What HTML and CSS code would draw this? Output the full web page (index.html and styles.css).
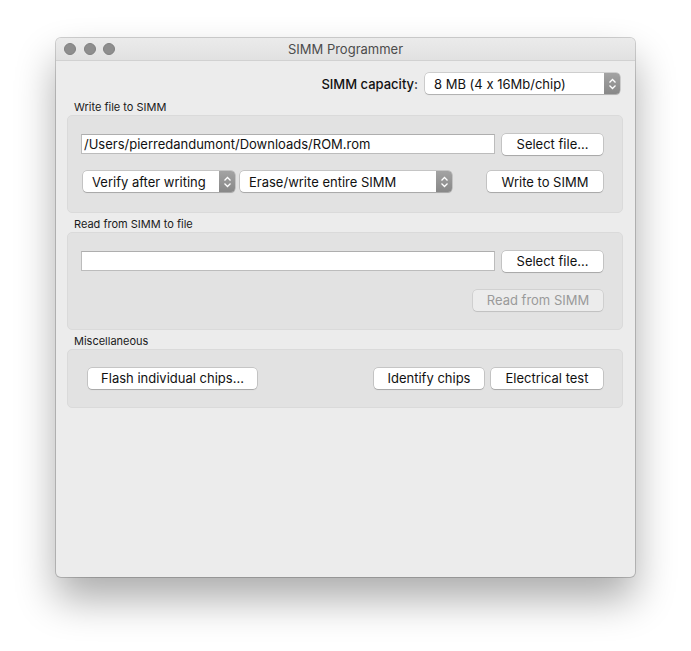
FILE: index.html
```html
<!DOCTYPE html>
<html lang="en">
<head>
  <meta charset="UTF-8" />
  <title>SIMM Programmer</title>
  <link rel="stylesheet" href="styles.css">
</head>
<body>
  <div class="window">
    <div class="titlebar">
      <div class="lights">
        <span class="light"></span>
        <span class="light"></span>
        <span class="light"></span>
      </div>
      <div class="title">SIMM Programmer</div>
    </div>

    <div class="content">
      <!-- capacity -->
      <div class="capacity-row">
        <span class="capacity-label">SIMM capacity:</span>
        <div class="popup popup-capacity">
          <span class="popup-text">8 MB (4 x 16Mb/chip)</span>
          <span class="stepper">
            <svg width="9" height="12" viewBox="0 0 9 12"><path d="M1.5 4.5 L4.5 1.5 L7.5 4.5 M1.5 7.5 L4.5 10.5 L7.5 7.5" fill="none" stroke="#fff" stroke-width="1.3"/></svg>
          </span>
        </div>
      </div>

      <!-- write -->
      <div class="group-label">Write file to SIMM</div>
      <div class="group">
        <div class="row">
          <input class="field" type="text" value="/Users/pierredandumont/Downloads/ROM.rom">
          <button class="btn btn-select">Select file...</button>
        </div>
        <div class="row row-options">
          <div class="popup popup-verify">
            <span class="popup-text">Verify after writing</span>
            <span class="stepper">
              <svg width="9" height="12" viewBox="0 0 9 12"><path d="M1.5 4.5 L4.5 1.5 L7.5 4.5 M1.5 7.5 L4.5 10.5 L7.5 7.5" fill="none" stroke="#fff" stroke-width="1.3"/></svg>
            </span>
          </div>
          <div class="popup popup-erase">
            <span class="popup-text">Erase/write entire SIMM</span>
            <span class="stepper">
              <svg width="9" height="12" viewBox="0 0 9 12"><path d="M1.5 4.5 L4.5 1.5 L7.5 4.5 M1.5 7.5 L4.5 10.5 L7.5 7.5" fill="none" stroke="#fff" stroke-width="1.3"/></svg>
            </span>
          </div>
          <button class="btn btn-write">Write to SIMM</button>
        </div>
      </div>

      <!-- read -->
      <div class="group-label">Read from SIMM to file</div>
      <div class="group">
        <div class="row">
          <input class="field" type="text" value="">
          <button class="btn btn-select">Select file...</button>
        </div>
        <div class="row row-end">
          <button class="btn btn-read" disabled>Read from SIMM</button>
        </div>
      </div>

      <!-- misc -->
      <div class="group-label">Miscellaneous</div>
      <div class="group group-misc">
        <div class="row row-misc">
          <button class="btn btn-flash">Flash individual chips...</button>
          <div class="spacer"></div>
          <button class="btn btn-identify">Identify chips</button>
          <button class="btn btn-test">Electrical test</button>
        </div>
      </div>
    </div>
  </div>
</body>
</html>
```

FILE: styles.css
```css
* {
  box-sizing: border-box;
}
html {
  background: #fff;
}
body {
  margin: 0;
  min-height: 100vh;
  font-family: 'Inter', 'Liberation Sans', sans-serif;
  font-feature-settings: "calt" 0;
  font-size: 13px;
  color: #111;
  padding: 38px 0 80px 56px;
}

.window {
  width: 579px;
  height: 539px;
  background: #ececec;
  border-radius: 5px;
  box-shadow: 0 0 0 1px rgba(0, 0, 0, 0.18), 0 22px 40px rgba(0, 0, 0, 0.33);
  display: flex;
  flex-direction: column;
  overflow: hidden;
}

.titlebar {
  height: 23px;
  background: linear-gradient(#ebebeb, #e1e1e1);
  border-bottom: 1px solid #d1d1d1;
  position: relative;
  display: flex;
  align-items: center;
  justify-content: center;
  flex-shrink: 0;
}

.lights {
  position: absolute;
  left: 8px;
  top: 5px;
  display: flex;
  gap: 7.5px;
}
.light {
  width: 12px;
  height: 12px;
  border-radius: 50%;
  background: #8e8e8e;
  border: 1px solid #808080;
}

.title {
  color: #4c4c4c;
  font-size: 13px;
}

.content {
  padding: 12px 12px 0 11px;
}

.capacity-row {
  display: flex;
  justify-content: flex-end;
  align-items: center;
  gap: 7px;
  padding-right: 3px;
  height: 21px;
}
.capacity-label {
  font-weight: 500;
  color: #111;
}

.popup {
  height: 21px;
  background: #fff;
  border-radius: 4px;
  box-shadow: 0 0 0 0.5px rgba(0, 0, 0, 0.25), 0 1px 1px rgba(0, 0, 0, 0.15);
  display: flex;
  align-items: center;
  overflow: hidden;
}
.popup-text {
  flex: 1;
  padding-left: 9px;
  white-space: nowrap;
}
.stepper {
  width: 16px;
  height: 100%;
  background: linear-gradient(#a3a3a3, #888);
  display: flex;
  align-items: center;
  justify-content: center;
}
.popup-capacity { width: 195px; }
.popup-verify { width: 152px; }
.popup-erase { width: 212px; }

.group-label {
  font-size: 11px;
  line-height: 13px;
  padding-left: 7px;
  margin-top: 7px;
  margin-bottom: 1px;
  color: #1a1a1a;
}

.group {
  background: #e2e2e2;
  border: 1px solid #dadada;
  border-radius: 5px;
  height: 98px;
  padding: 18px 19px 0 13px;
}
.group + .group-label {
  margin-top: 5px;
}
.group-misc {
  height: 59px;
}

.row {
  display: flex;
  align-items: center;
  gap: 7px;
  height: 20px;
}
.row-options {
  margin-top: 17px;
  height: 21px;
  padding-left: 2px;
  gap: 5px;
}
.row-options .btn-write {
  margin-left: auto;
}
.row-end {
  margin-top: 19px;
  justify-content: flex-end;
}
.row-misc {
  padding-left: 7px;
  gap: 7px;
}
.spacer {
  flex: 1;
}

.field {
  flex: 1;
  height: 20px;
  border: 1px solid #bcbcbc;
  border-top-color: #aeaeae;
  background: #fff;
  font-family: inherit;
  font-feature-settings: inherit;
  font-size: 13px;
  color: #111;
  padding: 0 2px;
  outline: none;
}

.btn {
  height: 21px;
  background: #fff;
  border: none;
  border-radius: 4px;
  box-shadow: 0 0 0 0.5px rgba(0, 0, 0, 0.25), 0 1px 1px rgba(0, 0, 0, 0.15);
  font-family: inherit;
  font-feature-settings: inherit;
  font-size: 13px;
  color: #111;
  padding: 0;
  white-space: nowrap;
}
.btn:disabled {
  background: #ececec;
  color: #9a9a9a;
  box-shadow: 0 0 0 0.5px rgba(0, 0, 0, 0.15), 0 1px 1px rgba(0, 0, 0, 0.08);
}
.btn-select { width: 101px; }
.btn-write { width: 116px; }
.btn-read { width: 130px; }
.btn-flash { width: 169px; }
.btn-identify { width: 110px; }
.btn-test { width: 112px; }
```
